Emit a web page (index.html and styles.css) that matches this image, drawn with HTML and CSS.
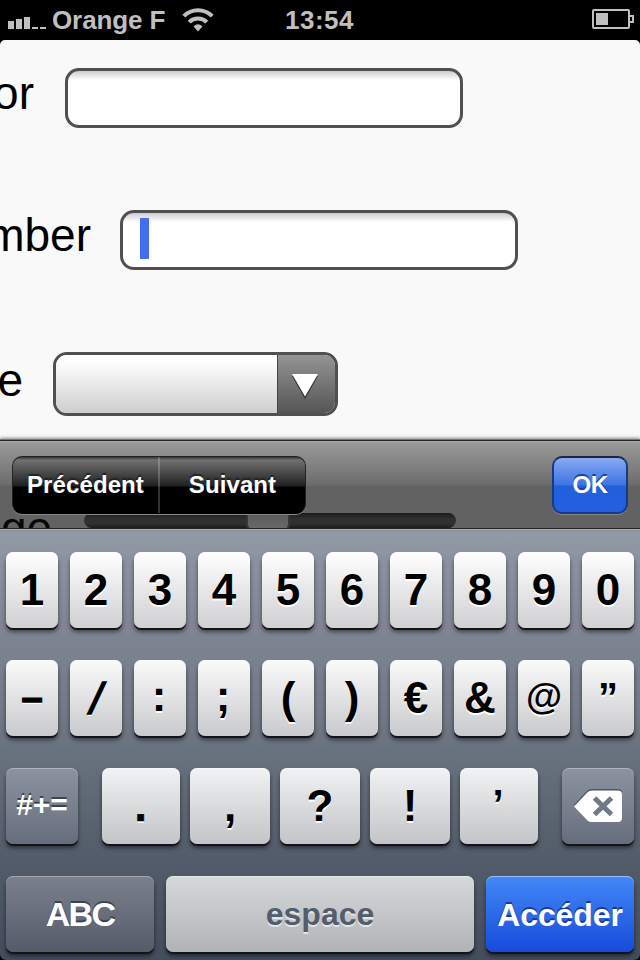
FILE: index.html
```html
<!DOCTYPE html>
<html lang="fr">
<head>
<meta charset="utf-8">
<title>Formulaire</title>
<link rel="stylesheet" href="styles.css">
</head>
<body>
<div class="screen">
  <header class="status">
    <div class="status-left">
      <div class="signal"><i class="s1"></i><i class="s2"></i><i class="s3"></i><i></i><i></i></div>
      <span class="carrier">Orange F</span>
      <svg class="wifi" width="32" height="24" viewBox="0 0 32 24">
        <g fill="none" stroke="#bfbfbf" stroke-width="4">
          <path d="M1.8 8.2A20 20 0 0 1 30.2 8.2"/>
          <path d="M7.2 14.2A12.5 12.5 0 0 1 24.8 14.2"/>
        </g>
        <path d="M11.5 18.5Q16 13.8 20.5 18.5L16 23.5Z" fill="#bfbfbf"/>
      </svg>
    </div>
    <span class="clock">13:54</span>
    <svg class="battery" width="42" height="20" viewBox="0 0 42 20">
      <rect x="1" y="1" width="36" height="18" rx="1" fill="none" stroke="#bfbfbf" stroke-width="2"/>
      <rect x="4" y="4" width="12" height="12" fill="#bfbfbf"/>
      <path d="M38 7H41V13H38" fill="none" stroke="#bfbfbf" stroke-width="2"/>
    </svg>
  </header>

  <main class="page">
    <div class="row"><label class="label l1">or</label><div class="field"></div></div>
    <div class="row"><label class="label l2">mber</label><div class="field"><span class="caret"></span></div></div>
    <div class="row"><label class="label l3">e</label>
      <div class="select"><span class="value"></span><span class="arrow">
        <svg width="28" height="26" viewBox="0 0 28 26"><path d="M1 3H27L14 26Z" fill="#333"/><path d="M1 1H27L14 23.5Z" fill="#fff"/></svg>
      </span></div>
    </div>
  </main>

  <section class="toolbar">
    <div class="behind"><span class="hidden-label">ge</span><div class="track"><span class="thumb"></span></div></div>
    <div class="segments"><button>Précédent</button><button>Suivant</button></div>
    <button class="ok">OK</button>
  </section>

  <section class="keyboard">
    <div class="keys ten">
      <b class="key">1</b><b class="key">2</b><b class="key">3</b><b class="key">4</b><b class="key">5</b><b class="key">6</b><b class="key">7</b><b class="key">8</b><b class="key">9</b><b class="key">0</b>
    </div>
    <div class="keys ten second">
      <b class="key dash">–</b><b class="key slash">/</b><b class="key colon">:</b><b class="key colon">;</b><b class="key paren">(</b><b class="key paren">)</b><b class="key">€</b><b class="key">&amp;</b><b class="key at">@</b><b class="key quote">”</b>
    </div>
    <div class="keys third">
      <b class="key dark sym">#+=</b><b class="key point">.</b><b class="key">,</b><b class="key">?</b><b class="key">!</b><b class="key quote">’</b>
      <b class="key dark del"><svg width="48" height="34" viewBox="0 0 48 34">
        <path d="M0 16L13 2Q15 0 18 0H44Q48 0 48 4V20H2Z" fill="#4c5361"/>
        <path d="M0 17.5L13.5 3.3Q15 1.6 18 1.6H44Q48 1.6 48 5.6V29Q48 33 44 33H18Q15 33 13.5 31.4Z" fill="#fff"/>
        <path d="M20.5 9L37.5 25.5M37.5 9L20.5 25.5" stroke="#717987" stroke-width="5"/>
      </svg></b>
    </div>
    <div class="keys fourth">
      <b class="key dark abc">ABC</b><b class="key space">espace</b><b class="key go">Accéder</b>
    </div>
  </section>
</div>
</body>
</html>
```
FILE: styles.css
```css
* { box-sizing: border-box; }
body { margin: 0; background: #000; font-family: "Liberation Sans", Arial, sans-serif; }
button { border: 0; padding: 0; background: none; font: inherit; color: inherit; }
.screen { width: 640px; height: 960px; overflow: hidden; background: #000; display: flex; flex-direction: column; }

.status { height: 40px; flex: none; display: grid; grid-template-columns: 1fr auto 1fr; align-items: center; padding: 0 6px 0 8px; color: #bfbfbf; font-weight: bold; font-size: 26px; line-height: 40px; }
.status-left { display: flex; align-items: center; }
.signal { display: flex; align-items: flex-end; gap: 2px; height: 12px; margin: 5px 6px 0 0; }
.signal i { width: 6px; height: 2px; background: #bfbfbf; }
.signal .s1 { height: 8px; }
.signal .s2 { height: 10px; }
.signal .s3 { height: 12px; }
.carrier { width: 114px; white-space: nowrap; letter-spacing: -.1px; }
.wifi { margin-left: 16px; }
.clock { letter-spacing: .5px; margin-right: 3px; }
.battery { justify-self: end; margin-top: -2px; }

.page { height: 399px; flex: none; background: #f9f9f9; border-radius: 5px 5px 0 0; padding-top: 28px; display: flex; flex-direction: column; gap: 82px; }
.row { display: flex; height: 60px; }
.label { display: flex; justify-content: flex-end; flex: none; font-size: 46px; line-height: 50px; color: #000; }
.l1 { width: 34px; margin-right: 31px; }
.l2 { width: 91px; margin-right: 29px; }
.l3 { width: 23px; margin-right: 30px; padding-top: 3px; }
.field { width: 398px; height: 60px; border: 3px solid #505050; border-radius: 14px; background: linear-gradient(#ccc, #fff 9px); padding: 5px 17px; }
.caret { display: block; width: 9px; height: 41px; background: #436ef0; }
.select { width: 285px; height: 64px; flex: none; border: 3px solid #505050; border-radius: 14px; display: flex; overflow: hidden; }
.value { flex: 1; background: linear-gradient(#fff 10%, #cecece); }
.arrow { width: 58px; border-left: 1px solid #444; background: linear-gradient(#949494, #555); display: flex; align-items: center; justify-content: center; padding: 3px 3px 0 0; }

.toolbar { height: 91px; flex: none; position: relative; z-index: 1; padding: 17px 12px 0; display: flex; justify-content: space-between; border-bottom: 1px solid #b0b0bd; background: linear-gradient(#777 1px, #262626 1px, #262626 2px, #aaa 2px, #999 4px, #6c6c6c 46px, #626262 47px, #626262 89px, #222 89px); box-shadow: 0 -1px 3px rgba(0,0,0,.45); color: #fff; font-weight: bold; font-size: 24px; }
.behind { position: absolute; left: 0; right: 0; top: 74px; height: 16px; overflow: hidden; display: flex; border-bottom: 1px solid #222; }
.hidden-label { width: 84px; padding-left: 1px; font-size: 46px; line-height: 30px; font-weight: normal; color: #080808; }
.track { width: 372px; height: 15px; border-radius: 8px; background: linear-gradient(#1b1b1b, #303030 6px, #303030 11px, #1c1c1c); display: flex; padding-left: 162px; }
.thumb { width: 44px; height: 19px; border: 2px solid #383838; border-top: 0; border-radius: 4px 4px 8px 8px; background: linear-gradient(#5a5a5a, #6a6a6a); }
.segments { position: relative; width: 294px; height: 58px; border: 1px solid #222; border-bottom-color: #000; border-radius: 10px; overflow: hidden; display: flex; background: linear-gradient(#333, #717171 3px, #202020 29px, #000 30px); box-shadow: 0 1px 0 #888; }
.segments button { flex: 1; text-shadow: 0 -2px 1px #222; letter-spacing: .1px; }
.segments button + button { border-left: 2px solid rgba(255,255,255,.2); }
.ok { position: relative; width: 76px; height: 58px; border: 2px solid #173a86; border-top-color: #20263a; border-radius: 10px; background: linear-gradient(#89a9f4, #3d74e1 27px, #215fdd 28px, #2360df); box-shadow: 0 1px 0 #888; text-shadow: 0 -2px 0 #1b429b; letter-spacing: -.5px; }

.keyboard { flex: 1; padding: 22px 6px 0; display: flex; flex-direction: column; gap: 32px; border-radius: 0 0 6px 6px; background: linear-gradient(#929aa6, #7e8491 24%, #777c89 38%, #6a7380 50%, #57606d 71%, #4f5866 82%, #434d5d); }
.keys { height: 76px; flex: none; display: flex; }
.ten { gap: 12px; }
.key { width: 52px; height: 76px; flex: none; border-radius: 7px; display: flex; align-items: center; justify-content: center; font-size: 44px; line-height: 76px; color: #000; background: linear-gradient(#fff, #d0d0d3); text-shadow: 0 2px 0 #fff; box-shadow: 0 2px 0 #111419, 0 4px 4px rgba(0,0,0,.5), inset 0 1px 0 rgba(255,255,255,.45); }
.second .key { background: linear-gradient(#fafafa, #c9cacd); }
.third .key { background: linear-gradient(#f1f2f3, #c3c4c7); }
.third { gap: 10px; }
.third .key { width: 80px; }
.third .key:nth-child(2), .third .key:nth-child(6) { width: 78px; }
.third .key.dark { width: 72px; background: linear-gradient(#8c93a0, #666e7d); }
.third .sym { margin-right: 14px; }
.third .del { margin-left: 14px; }
.dark { color: #fff; text-shadow: 0 -2px 0 #3d4350; box-shadow: 0 2px 0 #111419, 0 4px 4px rgba(0,0,0,.5), inset 0 1px 0 rgba(255,255,255,.3); }
.third .sym { font-size: 30px; letter-spacing: 0; padding-bottom: 2px; }
.dash { font-size: 38px; -webkit-text-stroke: 1.4px #000; }
.slash { font-style: italic; font-size: 44px; font-weight: normal; -webkit-text-stroke: 1.5px #000; padding-top: 2px; }
.colon { padding-right: 2px; padding-bottom: 4px; }
.paren { font-size: 44px; padding-bottom: 1px; }
.at { font-size: 37px; padding-bottom: 3px; }
.quote { font-size: 40px; padding-bottom: 2px; }
.third .quote { padding-right: 2px; padding-bottom: 4px; }
.point { padding-right: 1px; -webkit-text-stroke: .6px #000; }
.fourth { gap: 12px; }
.fourth .abc { width: 148px; background: linear-gradient(#7b808c, #545b69); font-size: 34px; letter-spacing: -1.7px; }
.fourth .space { width: 308px; background: linear-gradient(#d5d9da, #b2b3b7); color: #535d6b; text-shadow: 0 2px 0 #e5e6e8; font-size: 32px; }
.fourth .go { width: 148px; background: linear-gradient(#4288f6, #184bdb); color: #fff; text-shadow: 0 -2px 0 #183c91; font-size: 32px; letter-spacing: -.1px; padding-top: 1px; }
```
